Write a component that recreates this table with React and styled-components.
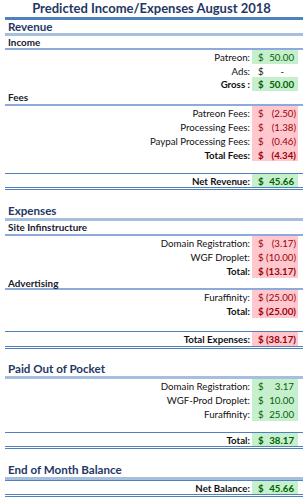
import React from 'react';
import styled, { createGlobalStyle } from 'styled-components';

const GlobalStyle = createGlobalStyle`
  html, body {
    margin: 0;
    padding: 0;
    background: #ffffff;
  }
  body {
    font-family: Lato, "Liberation Sans", sans-serif;
    color: #000;
  }
`;

const tones = {
  green: { bg: '#c6efce', fg: '#006100' },
  red: { bg: '#ffc7ce', fg: '#9c0006' },
  none: { bg: 'transparent', fg: '#111' },
};

const Sheet = styled.div`
  width: 298px;
  margin-left: 5px;
  display: flex;
  flex-direction: column;
`;

const Title = styled.div`
  height: 17px;
  margin-left: -5px;
  text-align: center;
  font-size: 13px;
  font-weight: 700;
  line-height: 17px;
  color: #1f3864;
  position: relative;

  &::after {
    content: '';
    position: absolute;
    left: 5px;
    right: 0;
    bottom: -3px;
    height: 3px;
    background: #4f81bd;
  }
`;

const Heading = styled.div`
  height: ${p => p.$h}px;
  line-height: ${p => p.$h}px;
  padding-left: 3px;
  font-size: ${p => (p.$major ? '11.6px' : '9.9px')};
  font-weight: 700;
  color: ${p => (p.$major ? '#1f3864' : '#17202e')};
  border-bottom: ${p => (p.$major ? '3px solid #a7bfde' : '2px solid #8eaadb')};
  margin-top: ${p => p.$top || 0}px;
  white-space: nowrap;
`;

const Row = styled.div`
  display: grid;
  grid-template-columns: 1fr 46px;
  padding-right: 5px;
  height: ${p => p.$h || 14}px;
  font-size: 9.7px;
  font-weight: ${p => (p.$bold ? 700 : 400)};
  border-top: ${p => (p.$rule ? '1px solid #4f81bd' : 'none')};
  border-bottom: ${p => (p.$rule ? '3px double #4f81bd' : 'none')};
`;

const Label = styled.div`
  display: flex;
  align-items: center;
  justify-content: flex-end;
  padding-right: 2px;
  white-space: nowrap;
  color: #111;
`;

const Cell = styled.div`
  display: flex;
  align-items: center;
  justify-content: space-between;
  padding: 0 ${p => (p.$paren ? 2 : 4)}px 0 6px;
  background: ${p => tones[p.$tone].bg};
  color: ${p => tones[p.$tone].fg};
`;

const Dash = styled.span`
  padding-right: 10px;
`;

const Spacer = styled.div`
  height: ${p => p.$h}px;
`;

const Item = ({ label, value, tone = 'none', bold, rule, h }) => {
  const paren = value.startsWith('(');
  return (
    <Row $bold={bold} $rule={rule} $h={h}>
      <Label>{label}</Label>
      <Cell $tone={tone} $paren={paren}>
        <span>$</span>
        {value === '-' ? <Dash>-</Dash> : <span>{value}</span>}
      </Cell>
    </Row>
  );
};

export default function App() {
  return (
    <>
      <GlobalStyle />
      <Sheet>
        <Title>Predicted Income/Expenses August 2018</Title>

        <Heading $major $h={13} $top={3}>Revenue</Heading>
        <Heading $h={12}>Income</Heading>
        <Item label="Patreon:" value="50.00" tone="green" />
        <Item label="Ads:" value="-" h={13} />
        <Item label="Gross :" value="50.00" tone="green" bold />

        <Heading $h={13}>Fees</Heading>
        <Item label="Patreon Fees:" value="(2.50)" tone="red" />
        <Item label="Processing Fees:" value="(1.38)" tone="red" />
        <Item label="Paypal Processing Fees:" value="(0.46)" tone="red" />
        <Item label="Total Fees:" value="(4.34)" tone="red" bold h={13} />
        <Spacer $h={12} />
        <Item label="Net Revenue:" value="45.66" tone="green" bold rule h={13} />

        <Spacer $h={13} />
        <Heading $major $h={15}>Expenses</Heading>
        <Heading $h={13}>Site Infinstructure</Heading>
        <Item label="Domain Registration:" value="(3.17)" tone="red" />
        <Item label="WGF Droplet:" value="(10.00)" tone="red" />
        <Item label="Total:" value="(13.17)" tone="red" bold />
        <Heading $h={10}>Advertising</Heading>
        <Item label="Furaffinity:" value="(25.00)" tone="red" />
        <Item label="Total:" value="(25.00)" tone="red" bold />
        <Spacer $h={13} />
        <Item label="Total Expenses:" value="(38.17)" tone="red" bold rule />

        <Spacer $h={13} />
        <Heading $major $h={14}>Paid Out of Pocket</Heading>
        <Item label="Domain Registration:" value="3.17" tone="green" />
        <Item label="WGF-Prod Droplet:" value="10.00" tone="green" />
        <Item label="Furaffinity:" value="25.00" tone="green" />
        <Spacer $h={11} />
        <Item label="Total:" value="38.17" tone="green" bold rule h={13} />

        <Spacer $h={14} />
        <Heading $major $h={14}>End of Month Balance</Heading>
        <Item label="Net Balance:" value="45.66" tone="green" bold rule h={13} />
      </Sheet>
    </>
  );
}
